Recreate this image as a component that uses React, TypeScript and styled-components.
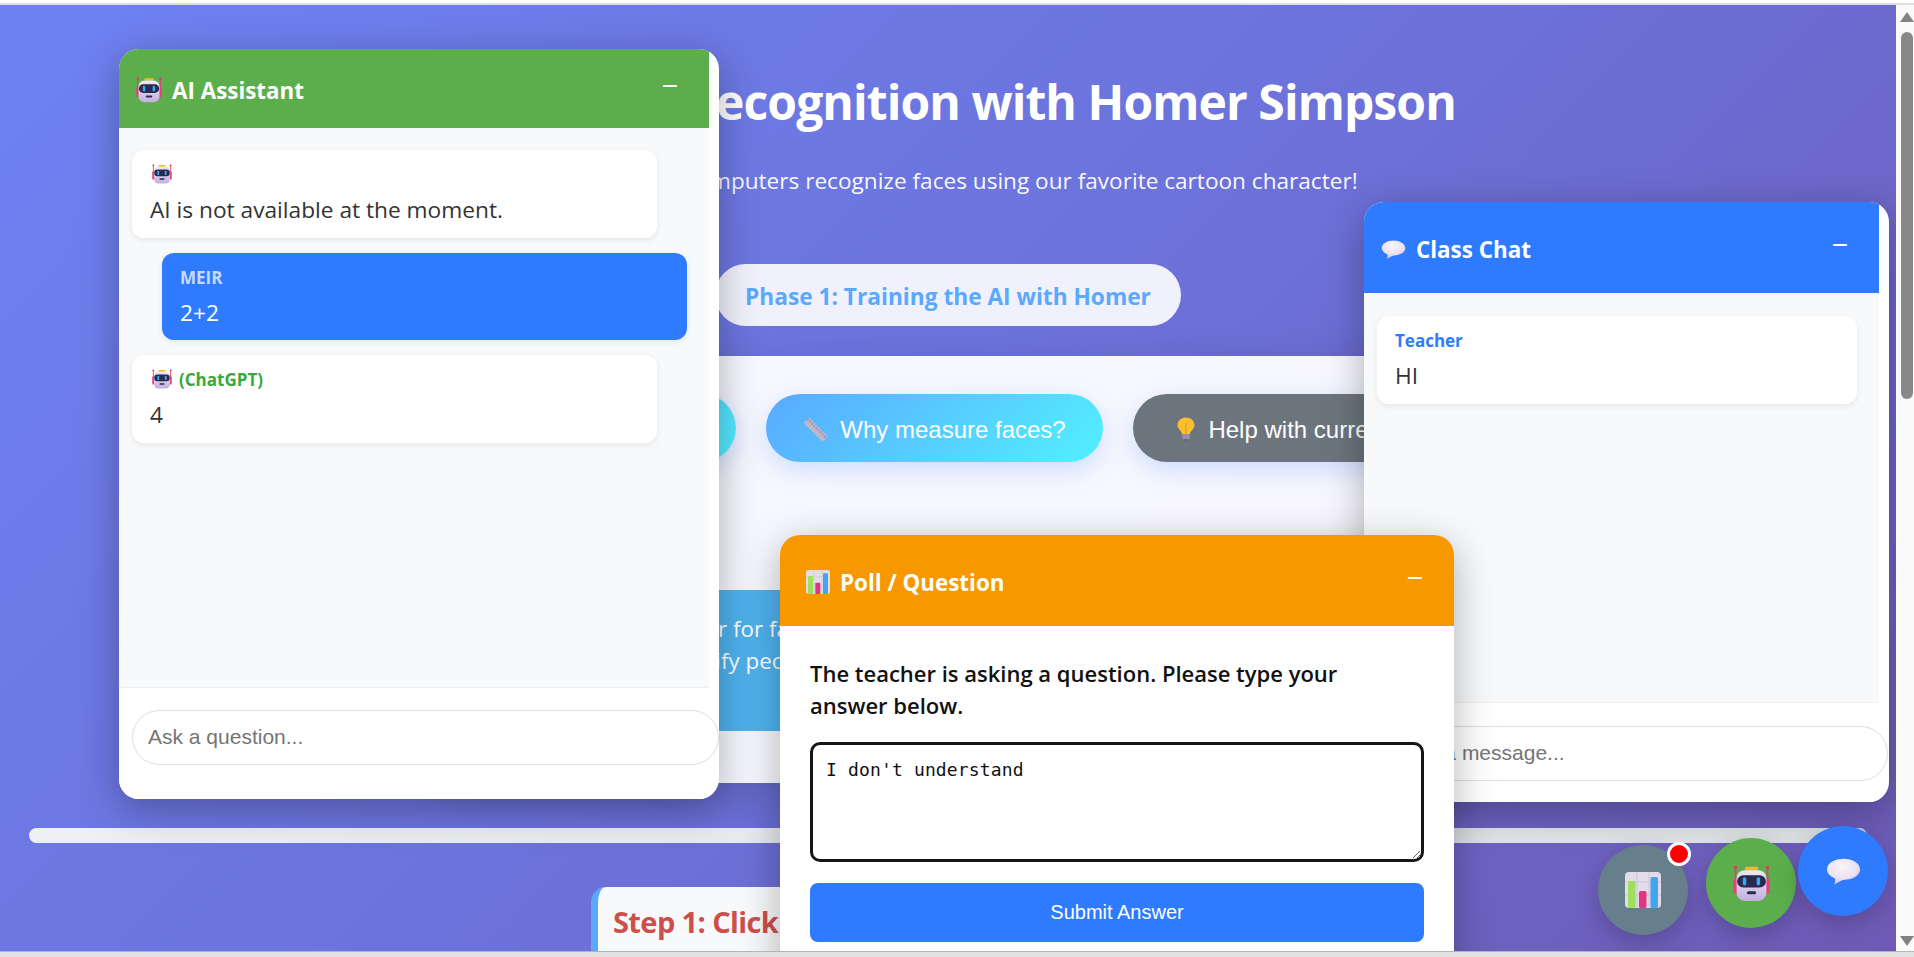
import React from "react";
import styled, { createGlobalStyle } from "styled-components";

const GlobalStyle = createGlobalStyle`
    html, body {
        margin: 0;
        height: 100%;
        overflow: hidden;
        background: #ffffff;
    }
    * {
        box-sizing: border-box;
    }
`;

const UI_FONT = `"Open Sans", "Noto Sans", sans-serif`;
const FORM_FONT = `"Liberation Sans", Arial, sans-serif`;

function RobotIcon({ size }: { size: number }) {
    return (
        <svg width={size} height={size} viewBox="0 0 36 36" aria-hidden="true">
            <defs>
                <linearGradient id="robotHead" x1="0" y1="0" x2="0" y2="1">
                    <stop offset="0" stopColor="#efe9f2" />
                    <stop offset="1" stopColor="#c4aede" />
                </linearGradient>
            </defs>
            <rect x="11.5" y="1.8" width="13" height="3.2" rx="1.6" fill="#f5bd12" />
            <rect x="1.6" y="3" width="1.6" height="12" fill="#e0406f" />
            <rect x="32.8" y="3" width="1.6" height="12" fill="#e0406f" />
            <circle cx="2.4" cy="2.4" r="1.7" fill="#e8325f" />
            <circle cx="33.6" cy="2.4" r="1.7" fill="#e8325f" />
            <rect x="0.4" y="13" width="3.6" height="15" rx="1.6" fill="#e8407a" />
            <rect x="32" y="13" width="3.6" height="15" rx="1.6" fill="#e8407a" />
            <rect x="3.5" y="5" width="29" height="30" rx="8" fill="url(#robotHead)" />
            <rect x="4" y="10" width="28" height="12" rx="6" fill="#2a2a4e" />
            <rect x="9.5" y="12" width="3.4" height="8" rx="1.7" fill="#3aa6f0" />
            <rect x="23" y="12" width="3.4" height="8" rx="1.7" fill="#3aa6f0" />
            <rect x="13.5" y="25.5" width="9" height="3" rx="1.5" fill="#2a2a4e" />
        </svg>
    );
}

function ChartIcon({ size }: { size: number }) {
    return (
        <svg width={size} height={size} viewBox="0 0 36 36" aria-hidden="true">
            <rect x="0" y="0" width="36" height="36" rx="4" fill="#e2dde8" />
            <path d="M12 0V36M24 0V36M0 10H36M0 23H36" stroke="#c9c3d2" strokeWidth="0.8" />
            <rect x="3" y="9" width="7.5" height="27" rx="1.5" fill="#9fdf5c" />
            <rect x="14" y="19" width="7.5" height="17" rx="1.5" fill="#e2357f" />
            <rect x="25.5" y="5" width="7.5" height="31" rx="1.5" fill="#42a4f2" />
        </svg>
    );
}

function BubbleIcon({ size }: { size: number }) {
    return (
        <svg width={size} height={size} viewBox="0 0 36 28" aria-hidden="true">
            <defs>
                <radialGradient id="bubbleFill" cx="0.45" cy="0.3" r="0.8">
                    <stop offset="0" stopColor="#f8f4f9" />
                    <stop offset="0.55" stopColor="#ece3f1" />
                    <stop offset="1" stopColor="#c7b2dc" />
                </radialGradient>
            </defs>
            <path
                d="M18 1C27 1 35 5.500 35 12C35 18 28 22.500 19 22.500C16 22.500 12.500 25.500 8.500 27.500C9.500 25 9.800 22.500 9 21C4 19 1 15.500 1 12C1 5.500 9 1 18 1Z"
                fill="url(#bubbleFill)"
            />
        </svg>
    );
}

function RulerIcon() {
    return (
        <svg width="25" height="25" viewBox="0 0 25 25" aria-hidden="true">
            <path d="M0.500 6L6 0.500L24.500 19.500L19.500 24.500Z" fill="#bdbac4" />
            <path d="M4.500 2L23 21" stroke="#a57fd0" strokeWidth="2.400" strokeDasharray="1.400 1.600" />
        </svg>
    );
}

function BulbIcon() {
    return (
        <svg width="20" height="24" viewBox="0 0 20 24" aria-hidden="true">
            <path
                d="M10 0.500C14.500 0.500 18.500 3.500 18.500 8C18.500 11.500 15 13.500 13.800 17H6.200C5 13.500 1.500 11.500 1.500 8C1.500 3.500 5.500 0.500 10 0.500Z"
                fill="#fbbf2c"
            />
            <path d="M10 6V17" stroke="#e89a20" strokeWidth="1.100" />
            <rect x="6.300" y="17" width="7.400" height="5.200" rx="1.200" fill="#9c8cb8" />
            <rect x="8" y="22" width="4" height="1.800" fill="#6d5f88" />
        </svg>
    );
}

function App() {
    return (
        <>
            <GlobalStyle />
            <Screen>
                <TopStrip />
                <Middle>
                    <Viewport>
                        <Main>
                            <Title>
                                <RobotIcon size={44} />
                                AI Face Recognition with Homer Simpson
                            </Title>
                            <Subtitle>Discover how computers recognize faces using our favorite cartoon character!</Subtitle>
                            <PhasePill>Phase 1: Training the AI with Homer</PhasePill>
                            <Card>
                                <ButtonRow>
                                    <ActionButton $width={324}>Ask about face data</ActionButton>
                                    <ActionButton>
                                        <RulerIcon />
                                        Why measure faces?
                                    </ActionButton>
                                    <ActionButton $grey $width={351}>
                                        <BulbIcon />
                                        Help with current step
                                    </ActionButton>
                                </ButtonRow>
                                <InfoBox>
                                    Think of it like a ruler for faces that
                                    <br />
                                    It helps you to identify people by shape
                                </InfoBox>
                            </Card>
                            <ProgressTrack />
                            <StepCard>
                                <StepTitle>Step 1: Click on Homer's eyes</StepTitle>
                            </StepCard>
                        </Main>

                        <Window $left={119} $top={44} $width={600} $height={750}>
                            <WindowHeader $color="#5cae4c" $height={79}>
                                <HeaderTitle>
                                    <RobotIcon size={26} />
                                    AI Assistant
                                </HeaderTitle>
                                <MinimizeButton>−</MinimizeButton>
                            </WindowHeader>
                            <Messages>
                                <Message>
                                    <Sender>
                                        <RobotIcon size={20} />
                                    </Sender>
                                    <MessageText>AI is not available at the moment.</MessageText>
                                </Message>
                                <Message $mine>
                                    <Sender $color="#c5dcff">MEIR</Sender>
                                    <MessageText $mine>2+2</MessageText>
                                </Message>
                                <Message>
                                    <Sender $color="#38a83c">
                                        <RobotIcon size={20} />
                                        (ChatGPT)
                                    </Sender>
                                    <MessageText>4</MessageText>
                                </Message>
                            </Messages>
                            <InputBar $height={112} $pad={22}>
                                <ChatInput $width={587} placeholder="Ask a question..." />
                            </InputBar>
                        </Window>

                        <Window $left={1364} $top={197} $width={525} $height={600}>
                            <WindowHeader $color="#2e7bff" $height={91}>
                                <HeaderTitle>
                                    <BubbleIcon size={25} />
                                    Class Chat
                                </HeaderTitle>
                                <MinimizeButton>−</MinimizeButton>
                            </WindowHeader>
                            <Messages $pad={23}>
                                <Message $full>
                                    <Sender $color="#2e7bff">Teacher</Sender>
                                    <MessageText>HI</MessageText>
                                </Message>
                            </Messages>
                            <InputBar $height={100} $pad={23}>
                                <ChatInput $width={511} placeholder="Type a message..." />
                            </InputBar>
                        </Window>

                        <Window $left={780} $top={530} $width={674} $height={500}>
                            <WindowHeader $color="#f79800" $height={91} $full>
                                <HeaderTitle>
                                    <ChartIcon size={24} />
                                    Poll / Question
                                </HeaderTitle>
                                <MinimizeButton>−</MinimizeButton>
                            </WindowHeader>
                            <PollBody>
                                <PollQuestion>The teacher is asking a question. Please type your answer below.</PollQuestion>
                                <PollAnswer defaultValue="I don't understand" />
                                <SubmitButton>Submit Answer</SubmitButton>
                            </PollBody>
                        </Window>

                        <Fab $left={1598} $top={840} $color="#677f8d">
                            <ChartIcon size={36} />
                            <Badge />
                        </Fab>
                        <Fab $left={1706} $top={833} $color="#5cae4c">
                            <RobotIcon size={37} />
                        </Fab>
                        <Fab $left={1798} $top={821} $color="#2e7bff">
                            <BubbleIcon size={35} />
                        </Fab>
                    </Viewport>
                    <ScrollColumn>
                        <ArrowUp />
                        <ScrollThumb />
                        <ArrowDown />
                    </ScrollColumn>
                </Middle>
                <BottomStrip />
            </Screen>
        </>
    );
}

const Screen = styled.div`
    display: flex;
    flex-direction: column;
    width: 1914px;
    height: 957px;
    overflow: hidden;
`;

const TopStrip = styled.div`
    height: 5px;
    flex: none;
    background: #ffffff;
    border-bottom: 2px solid #dedede;
`;

const BottomStrip = styled.div`
    height: 6px;
    flex: none;
    background: #e2e2e2;
    border-top: 1px solid #b4b4b4;
`;

const Middle = styled.div`
    display: flex;
    flex: 1;
    min-height: 0;
`;

const Viewport = styled.div`
    position: relative;
    flex: 1;
    overflow: hidden;
    background: linear-gradient(135deg, #6e82f2 0%, #6c72da 50%, #6e5ab6 100%);
`;

const Main = styled.main`
    display: flex;
    flex-direction: column;
    align-items: center;
    font-family: ${UI_FONT};
    color: #ffffff;
`;

const Title = styled.h1`
    margin: 62px 0 0;
    display: flex;
    align-items: center;
    gap: 26px;
    flex: none;
    font-size: 48px;
    line-height: 70px;
    font-weight: 700;
    letter-spacing: -0.9px;
    white-space: nowrap;
`;

const Subtitle = styled.p`
    margin: 28px 0 0;
    flex: none;
    font-size: 22.600px;
    line-height: 32px;
    opacity: 0.95;
    white-space: nowrap;
`;

const PhasePill = styled.div`
    margin-top: 67px;
    width: 466px;
    height: 62px;
    flex: none;
    display: flex;
    align-items: center;
    justify-content: center;
    padding-top: 2px;
    border-radius: 31px;
    background: rgba(255, 255, 255, 0.9);
    color: #5aa9ff;
    font-size: 22.700px;
    font-weight: 700;
    white-space: nowrap;
`;

const Card = styled.section`
    margin-top: 30px;
    width: 1000px;
    height: 427px;
    flex: none;
    padding-top: 38px;
    background: rgba(255, 255, 255, 0.95);
    box-shadow: 0 10px 40px rgba(0, 0, 0, 0.15);
`;

const ButtonRow = styled.div`
    display: flex;
    justify-content: center;
    gap: 30px;
`;

const ActionButton = styled.button<{ $grey?: boolean; $width?: number }>`
    height: 68px;
    flex: none;
    width: ${(p) => (p.$width ? `${p.$width}px` : "337px")};
    display: flex;
    align-items: center;
    justify-content: center;
    gap: 12px;
    padding: 3px 0 0;
    border: none;
    border-radius: 34px;
    color: #ffffff;
    font-family: ${FORM_FONT};
    font-size: 24px;
    white-space: nowrap;
    background: ${(p) => (p.$grey ? "#6c757d" : "linear-gradient(135deg, #5aa9ff, #52f0ff)")};
    box-shadow: 0 8px 25px rgba(79, 140, 254, 0.25);

    svg {
        margin-top: -1px;
    }
`;

const InfoBox = styled.div`
    margin: 128px 30px 0;
    height: 141px;
    padding: 23px 30px;
    background: linear-gradient(135deg, #4fb0ec, #4fb8f2);
    color: #ffffff;
    font-size: 22.400px;
    line-height: 32px;
    white-space: nowrap;
`;

const ProgressTrack = styled.div`
    margin-top: 45px;
    width: 1838px;
    height: 15px;
    flex: none;
    border-radius: 8px;
    background: linear-gradient(90deg, #eef0f3, #dfe3e6);
`;

const StepCard = styled.section`
    margin-top: 44px;
    width: 714px;
    height: 200px;
    flex: none;
    padding: 13px 15px;
    background: #f8f9fa;
    border-left: 7px solid #5aa9ff;
    border-radius: 15px 0 0 0;
`;

const StepTitle = styled.h2`
    margin: 0;
    color: #cd4f4a;
    font-size: 29px;
    line-height: 44px;
    font-weight: 700;
    letter-spacing: -0.6px;
    white-space: nowrap;
`;

const Window = styled.div<{ $left: number; $top: number; $width: number; $height: number }>`
    position: absolute;
    left: ${(p) => p.$left}px;
    top: ${(p) => p.$top}px;
    width: ${(p) => p.$width}px;
    height: ${(p) => p.$height}px;
    display: flex;
    flex-direction: column;
    overflow: hidden;
    border-radius: 20px;
    background: #ffffff;
    font-family: ${UI_FONT};
    box-shadow: 0 10px 40px rgba(0, 0, 0, 0.3);
`;

const WindowHeader = styled.header<{ $color: string; $height: number; $full?: boolean }>`
    flex: none;
    height: ${(p) => p.$height}px;
    width: ${(p) => (p.$full ? "100%" : "calc(100% - 10px)")};
    display: flex;
    align-items: center;
    justify-content: space-between;
    padding: 0 31px 0 ${(p) => (p.$full ? "26px" : "17px")};
    background: ${(p) => p.$color};
    color: #ffffff;
`;

const HeaderTitle = styled.div`
    display: flex;
    align-items: center;
    gap: 10px;
    margin-top: 3px;
    font-size: 22.400px;
    font-weight: 700;
`;

const MinimizeButton = styled.span`
    font-family: ${FORM_FONT};
    font-size: 28px;
    line-height: 24px;
    margin-top: -5px;
`;

const Messages = styled.div<{ $pad?: number }>`
    flex: 1;
    min-height: 0;
    width: calc(100% - 10px);
    display: flex;
    flex-direction: column;
    gap: 15px;
    padding: ${(p) => p.$pad ?? 22}px 22px 0 13px;
    background: #f8f9fa;
`;

const Message = styled.div<{ $mine?: boolean; $full?: boolean }>`
    flex: none;
    width: ${(p) => (p.$full ? "100%" : "525px")};
    margin-left: ${(p) => (p.$mine ? "30px" : "0")};
    padding: 12px 18px ${(p) => (p.$mine ? "11px" : "12px")};
    border-radius: 12px;
    background: ${(p) => (p.$mine ? "#2e7bff" : "#ffffff")};
    box-shadow: 0 2px 6px rgba(0, 0, 0, 0.08);

    svg {
        margin-left: 2px;
    }
`;

const Sender = styled.div<{ $color?: string }>`
    display: flex;
    align-items: center;
    gap: 7px;
    height: 24px;
    margin-bottom: 8px;
    color: ${(p) => p.$color ?? "#333333"};
    font-size: 17px;
    font-weight: 700;
`;

const MessageText = styled.div<{ $mine?: boolean }>`
    color: ${(p) => (p.$mine ? "#ffffff" : "#333333")};
    font-size: 22.700px;
    line-height: 32px;
`;

const InputBar = styled.div<{ $pad: number; $height: number }>`
    flex: none;
    height: ${(p) => p.$height}px;
    width: calc(100% - 10px);
    padding: ${(p) => p.$pad}px 0 0 13px;
    border-top: 1px solid #eeeeee;
    background: #ffffff;
`;

const ChatInput = styled.input<{ $width: number }>`
    display: block;
    width: ${(p) => p.$width}px;
    height: 55px;
    padding: 0 15px 2px;
    border: 1px solid #dddddd;
    border-radius: 28px;
    background: #ffffff;
    font-family: ${FORM_FONT};
    font-size: 21px;
    outline: none;
`;

const PollBody = styled.div`
    display: flex;
    flex-direction: column;
    padding: 31px 30px 0;
`;

const PollQuestion = styled.p`
    margin: 0;
    padding-right: 20px;
    color: #111111;
    font-size: 22px;
    line-height: 32px;
    font-weight: 600;
`;

const PollAnswer = styled.textarea`
    display: block;
    width: 614px;
    height: 120px;
    flex: none;
    margin-top: 21px;
    padding: 15px 13px;
    border: 3px solid #161616;
    border-radius: 10px;
    background: #ffffff;
    color: #111111;
    font-family: "DejaVu Sans Mono", "Liberation Mono", monospace;
    font-size: 18px;
    line-height: 20px;
    letter-spacing: 0.15px;
    resize: vertical;
    outline: none;
`;

const SubmitButton = styled.button`
    margin-top: 21px;
    width: 614px;
    height: 59px;
    border: none;
    border-radius: 8px;
    background: #2e7bff;
    color: #ffffff;
    font-family: ${FORM_FONT};
    font-size: 20px;
`;

const Fab = styled.div<{ $left: number; $top: number; $color: string }>`
    position: absolute;
    left: ${(p) => p.$left}px;
    top: ${(p) => p.$top}px;
    width: 90px;
    height: 90px;
    display: flex;
    align-items: center;
    justify-content: center;
    border-radius: 50%;
    background: ${(p) => p.$color};
    box-shadow: 0 8px 25px rgba(0, 0, 0, 0.2);
`;

const Badge = styled.span`
    position: absolute;
    top: -3px;
    right: -3px;
    width: 24px;
    height: 24px;
    border-radius: 50%;
    border: 3px solid #ffffff;
    background: #ff0000;
`;

const ScrollColumn = styled.div`
    position: relative;
    flex: none;
    width: 18px;
    display: flex;
    flex-direction: column;
    align-items: center;
    padding: 7px 0 5px 4px;
    background: #fafafa;
`;

const ArrowUp = styled.div`
    flex: none;
    width: 0;
    height: 0;
    border-left: 7px solid transparent;
    border-right: 7px solid transparent;
    border-bottom: 10px solid #828282;
`;

const ScrollThumb = styled.div`
    flex: none;
    margin-top: 10px;
    width: 12px;
    height: 367px;
    border-radius: 6px;
    background: #888888;
`;

const ArrowDown = styled.div`
    flex: none;
    margin-top: auto;
    width: 0;
    height: 0;
    border-left: 7px solid transparent;
    border-right: 7px solid transparent;
    border-top: 10px solid #828282;
`;

export default App;
